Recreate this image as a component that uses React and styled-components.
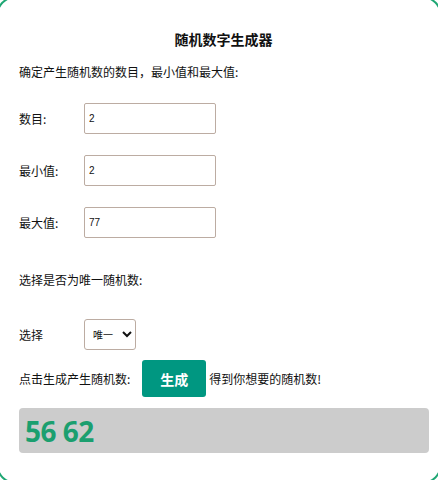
import React, { useState } from "react";
import styled, { createGlobalStyle } from "styled-components";

const GlobalStyle = createGlobalStyle`
  html, body {
    margin: 0;
    padding: 0;
    background: #fff;
    overflow: hidden;
  }
  body {
    font-family: "Noto Sans CJK SC", "Noto Sans", sans-serif;
    color: #111;
  }
`;

const Card = styled.div`
  box-sizing: border-box;
  width: 446px;
  height: 488px;
  margin: -4px 0 0 -4px;
  padding: 31px 12px 0 21px;
  border: 2px solid #1fa774;
  border-radius: 20px;
  display: flex;
  flex-direction: column;
`;

const Title = styled.h1`
  margin: 0;
  font-size: 14px;
  line-height: 20px;
  font-weight: 700;
  text-align: center;
`;

const Text = styled.p`
  margin: ${(p) => p.$top || 0}px 0 0;
  font-size: 12px;
  line-height: 18px;
`;

const Row = styled.div`
  display: flex;
  align-items: center;
  margin-top: ${(p) => p.$top}px;
  font-size: 12px;
`;

const Label = styled.span`
  width: 65px;
  flex-shrink: 0;
`;

const Input = styled.input`
  box-sizing: border-box;
  width: 132px;
  height: 31px;
  padding: 0 4px;
  border: 1px solid #bcaca2;
  border-radius: 2px;
  font-family: "Liberation Sans", Arial, sans-serif;
  font-size: 10px;
  color: #111;
  outline: none;
`;

const Select = styled.select`
  box-sizing: border-box;
  width: 52px;
  height: 31px;
  padding: 0 4px;
  border: 1px solid #bcaca2;
  border-radius: 3px;
  background: #fff;
  font-family: "Noto Sans CJK SC", sans-serif;
  font-size: 10px;
  color: #111;
`;

const Button = styled.button`
  box-sizing: border-box;
  width: 64px;
  height: 37px;
  margin: 0 3px 0 12px;
  border: none;
  border-radius: 3px;
  background: #009781;
  color: #fff;
  font-family: "Noto Sans CJK SC", sans-serif;
  font-size: 14px;
  font-weight: 700;
`;

const Result = styled.div`
  box-sizing: border-box;
  width: 410px;
  height: 45px;
  margin-top: 11px;
  padding-left: 6px;
  display: flex;
  align-items: center;
  background: #cccccc;
  border-radius: 4px;
  color: #1b9f6f;
  font-family: "Noto Sans", "Open Sans", sans-serif;
  font-size: 28px;
  font-weight: 700;
  letter-spacing: -0.5px;
`;

export default function App() {
  const [count, setCount] = useState("2");
  const [min, setMin] = useState("2");
  const [max, setMax] = useState("77");
  const [unique, setUnique] = useState("unique");
  const [numbers, setNumbers] = useState([56, 62]);

  function generate() {
    const n = parseInt(count, 10) || 0;
    const lo = parseInt(min, 10) || 0;
    const hi = parseInt(max, 10) || 0;
    const out = [];
    let guard = 0;
    while (out.length < n && guard < 1000) {
      guard++;
      const v = lo + Math.floor(Math.random() * (hi - lo + 1));
      if (unique === "unique" && out.includes(v)) continue;
      out.push(v);
    }
    setNumbers(out);
  }

  return (
    <>
      <GlobalStyle />
      <Card>
        <Title>随机数字生成器</Title>
        <Text $top={14}>确定产生随机数的数目，最小值和最大值:</Text>
        <Row $top={22}>
          <Label>数目:</Label>
          <Input value={count} onChange={(e) => setCount(e.target.value)} />
        </Row>
        <Row $top={21}>
          <Label>最小值:</Label>
          <Input value={min} onChange={(e) => setMin(e.target.value)} />
        </Row>
        <Row $top={21}>
          <Label>最大值:</Label>
          <Input value={max} onChange={(e) => setMax(e.target.value)} />
        </Row>
        <Text $top={33}>选择是否为唯一随机数:</Text>
        <Row $top={30}>
          <Label>选择</Label>
          <Select value={unique} onChange={(e) => setUnique(e.target.value)}>
            <option value="unique">唯一</option>
            <option value="repeat">可重复</option>
          </Select>
        </Row>
        <Row $top={10}>
          <span>点击生成产生随机数:</span>
          <Button onClick={generate}>生成</Button>
          <span>得到你想要的随机数!</span>
        </Row>
        <Result>{numbers.join(" ")}</Result>
      </Card>
    </>
  );
}
